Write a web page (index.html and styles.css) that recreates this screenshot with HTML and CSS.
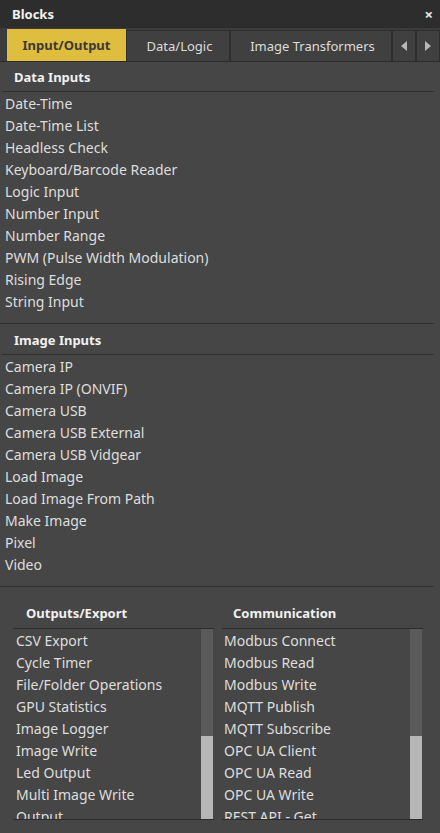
FILE: index.html
```html
<!DOCTYPE html>
<html>
<head>
<meta charset="utf-8">
<link rel="stylesheet" href="styles.css">
</head>
<body>
<div class="panel">
  <div class="titlebar">
    <span class="title">Blocks</span>
    <span class="close">×</span>
  </div>
  <div class="tabs">
    <div class="tab active">Input/Output</div>
    <div class="tab t2">Data/Logic</div>
    <div class="tab t3">Image Transformers</div>
    <div class="tab arrow"><svg width="8" height="10" viewBox="0 0 8 10"><polygon points="7,0 7,10 1,5" fill="#b8b8b8"/></svg></div>
    <div class="tab arrow"><svg width="8" height="10" viewBox="0 0 8 10"><polygon points="1,0 1,10 7,5" fill="#b8b8b8"/></svg></div>
  </div>
  <div class="section">
    <div class="sec-head">Data Inputs</div>
    <ul class="items">
      <li>Date-Time</li>
      <li>Date-Time List</li>
      <li>Headless Check</li>
      <li>Keyboard/Barcode Reader</li>
      <li>Logic Input</li>
      <li>Number Input</li>
      <li>Number Range</li>
      <li>PWM (Pulse Width Modulation)</li>
      <li>Rising Edge</li>
      <li>String Input</li>
    </ul>
  </div>
  <div class="section second">
    <div class="sec-head">Image Inputs</div>
    <ul class="items">
      <li>Camera IP</li>
      <li>Camera IP (ONVIF)</li>
      <li>Camera USB</li>
      <li>Camera USB External</li>
      <li>Camera USB Vidgear</li>
      <li>Load Image</li>
      <li>Load Image From Path</li>
      <li>Make Image</li>
      <li>Pixel</li>
      <li>Video</li>
    </ul>
  </div>
  <div class="columns">
    <div class="col">
      <div class="col-head">Outputs/Export</div>
      <div class="listbox">
        <ul class="litems">
          <li>CSV Export</li>
          <li>Cycle Timer</li>
          <li>File/Folder Operations</li>
          <li>GPU Statistics</li>
          <li>Image Logger</li>
          <li>Image Write</li>
          <li>Led Output</li>
          <li>Multi Image Write</li>
          <li>Output</li>
        </ul>
        <div class="scroll"><div class="sb-a"></div><div class="sb-b"></div></div>
      </div>
    </div>
    <div class="col">
      <div class="col-head">Communication</div>
      <div class="listbox">
        <ul class="litems">
          <li>Modbus Connect</li>
          <li>Modbus Read</li>
          <li>Modbus Write</li>
          <li>MQTT Publish</li>
          <li>MQTT Subscribe</li>
          <li>OPC UA Client</li>
          <li>OPC UA Read</li>
          <li>OPC UA Write</li>
          <li>REST API - Get</li>
        </ul>
        <div class="scroll"><div class="sb-a r"></div><div class="sb-b"></div></div>
      </div>
    </div>
  </div>
</div>
</body>
</html>
```
FILE: styles.css
```css
* { box-sizing: border-box; }
html, body { margin: 0; padding: 0; }
body {
  width: 440px;
  height: 833px;
  overflow: hidden;
  background: #464646;
  font-family: "Noto Sans", "Open Sans", sans-serif;
  color: #dedede;
}
.panel { width: 440px; height: 833px; display: flex; flex-direction: column; background: #464646; }
.titlebar {
  height: 28px;
  background: #2d2d2d;
  display: flex;
  align-items: center;
  justify-content: space-between;
  padding: 0 7px 0 12px;
}
.title { font-weight: bold; font-size: 13px; color: #f2f2f2; }
.close { font-size: 15px; color: #e8e8e8; font-weight: bold; line-height: 1; }
.tabs {
  height: 34px;
  display: flex;
  padding: 1px 0 0 7px;
  background: #3c3c3c;
  border-bottom: 1px solid #2b2b2b;
  align-items: stretch;
}
.tab {
  display: flex;
  align-items: center;
  justify-content: center;
  font-size: 13px;
  color: #dcdcdc;
  background: #404040;
  border: 1px solid #2e2e2e;
  border-bottom: none;
  margin-top: 1px;
}
.tab.active {
  width: 119px;
  background: #dfbd3e;
  color: #3a3a3a;
  font-weight: bold;
  border: none;
  margin-top: 0;
}
.t2 { width: 104px; padding-left: 3px; }
.t3 { width: 162px; padding-left: 3px; }
.arrow { width: 24px; }
.section {
  border-bottom: 1px solid #2f2f2f;
  padding-bottom: 10px;
  margin-right: 6px;
}
.sec-head {
  font-weight: bold;
  font-size: 13px;
  color: #f0f0f0;
  padding: 5px 0 5px 12px;
  height: 30px;
  line-height: 20px;
  border-bottom: 1px solid #2f2f2f;
  margin-left: 2px;
}
.second .sec-head { height: 31px; padding-top: 6px; }
.items { list-style: none; margin: 0; padding: 1px 0 0 5px; }
.items li { height: 22px; line-height: 22px; font-size: 14px; white-space: nowrap; }
.columns {
  display: flex;
  gap: 8px;
  padding: 15px 0 0 13px;
}
.col { width: 201px; display: flex; flex-direction: column; }
.col-head {
  font-weight: bold;
  font-size: 13px;
  color: #f0f0f0;
  height: 26px;
  line-height: 22px;
  padding-left: 13px;
}
.col + .col .col-head { padding-left: 11px; }
.listbox {
  height: 192px;
  border-top: 1px solid #2c2c2c;
  border-bottom: 1px solid #2c2c2c;
  display: flex;
  overflow: hidden;
}
.litems {
  list-style: none;
  margin: 0;
  padding: 1px 0 0 3px;
  flex: 1;
  overflow: hidden;
}
.col + .col .litems { padding-left: 2px; }
.litems li { height: 22px; line-height: 22px; font-size: 14px; white-space: nowrap; }
.scroll { width: 12px; display: flex; flex-direction: column; margin-right: 1px; }
.sb-a { height: 107px; background: #5a5a5a; }
.sb-b { flex: 1; background: #b6b6b6; }
```
